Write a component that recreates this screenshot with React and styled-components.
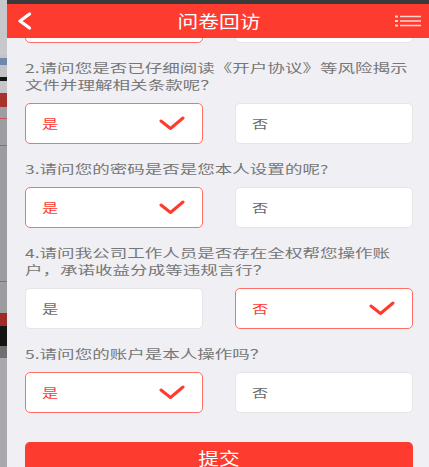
import React from 'react';
import styled, { createGlobalStyle } from 'styled-components';

const GlobalStyle = createGlobalStyle`
  html, body { margin: 0; padding: 0; }
  body {
    width: 429px;
    height: 467px;
    overflow: hidden;
    background: #efeff4;
    font-family: "Noto Sans CJK SC", "Noto Sans", sans-serif;
  }
`;

const Screen = styled.div`
  display: flex;
  width: 429px;
  height: 467px;
  overflow: hidden;
`;

const Backdrop = styled.div`
  width: 7px;
  flex-shrink: 0;
  display: flex;
  flex-direction: column;
  background: #a9a9ad;
`;

const Band = styled.div`
  height: ${(p) => p.$h}px;
  background: ${(p) => p.$c};
  flex-shrink: 0;
`;

const Phone = styled.div`
  flex: 1;
  min-width: 0;
  display: flex;
  flex-direction: column;
  background: #efeff4;
`;

const StatusBar = styled.div`
  height: 4px;
  background: #3a3a3a;
  flex-shrink: 0;
`;

const Header = styled.header`
  height: 34px;
  flex-shrink: 0;
  background: #fd3b2f;
  display: flex;
  align-items: center;
  justify-content: space-between;
  padding: 0 8px 0 10px;
  position: relative;
  z-index: 1;
`;

const HeaderSide = styled.div`
  width: 40px;
  display: flex;
  align-items: center;
  justify-content: ${(p) => (p.$end ? 'flex-end' : 'flex-start')};
`;

const Title = styled.h1`
  margin: 0;
  width: 84px;
  display: flex;
  justify-content: center;
  font-size: 17px;
  font-weight: 400;
  color: #ffffff;
  line-height: 24px;
  white-space: nowrap;
`;

const TitleText = styled.span`
  display: inline-block;
  transform: scaleX(1.22);
`;

const Content = styled.main`
  flex: 1;
  overflow: hidden;
  display: flex;
  flex-direction: column;
  padding: 0 16px 0 18px;
`;

const Question = styled.div`
  margin-top: 16px;
  margin-bottom: 10px;
  color: #767676;
  font-size: 12px;
  line-height: 17px;
`;

const QLine = styled.span`
  display: block;
  white-space: nowrap;
  transform: scaleX(1.46);
  transform-origin: left center;
`;

const Options = styled.div`
  display: grid;
  grid-template-columns: 1fr 1fr;
  column-gap: 32px;
  margin-top: ${(p) => p.$offset || 0}px;
  flex-shrink: 0;
`;

const Option = styled.div`
  height: 41px;
  box-sizing: border-box;
  border-radius: 5px;
  background: #ffffff;
  border: ${(p) => (p.$selected ? '1.5px solid #ff6e64' : '1px solid #e6e6e9')};
  display: flex;
  align-items: center;
  justify-content: space-between;
  padding: 0 17px 0 16px;
`;

const OptionLabel = styled.span`
  font-size: 12px;
  color: ${(p) => (p.$selected ? '#ff3b30' : '#6a6a6a')};
  transform: scaleX(1.35);
  transform-origin: left center;
  display: inline-block;
`;

const Submit = styled.button`
  margin-top: 29px;
  flex-shrink: 0;
  height: 32px;
  border: none;
  border-radius: 5px;
  background: #fd3b2f;
  color: #ffffff;
  font-family: inherit;
  font-size: 17px;
  line-height: 20px;
  display: flex;
  align-items: center;
  justify-content: center;
  padding: 0;
`;

const SubmitText = styled.span`
  display: inline-block;
  transform: scaleX(1.22);
`;

const BackIcon = () => (
  <svg width="15" height="18" viewBox="0 0 15 18">
    <polyline
      points="12.5,2 3,9 12.5,16"
      fill="none"
      stroke="#ffffff"
      strokeWidth="3.2"
      strokeLinecap="round"
      strokeLinejoin="round"
    />
  </svg>
);

const MenuIcon = () => (
  <svg width="26" height="12" viewBox="0 0 26 12">
    {[1.5, 6, 10.5].map((y) => (
      <g key={y} fill="#ffd6d2">
        <rect x="0" y={y - 1} width="3" height="2" />
        <rect x="5" y={y - 0.75} width="21" height="1.5" />
      </g>
    ))}
  </svg>
);

const CheckIcon = () => (
  <svg width="26" height="15" viewBox="0 0 26 15">
    <polyline
      points="2,5 11.5,12.5 24,2"
      fill="none"
      stroke="#ff3b30"
      strokeWidth="3"
      strokeLinecap="round"
      strokeLinejoin="round"
    />
  </svg>
);

const questions = [
  {
    lines: ['2.请问您是否已仔细阅读《开户协议》等风险揭示', '文件并理解相关条款呢？'],
    answer: 'yes',
  },
  { lines: ['3.请问您的密码是否是您本人设置的呢?'], answer: 'yes' },
  {
    lines: ['4.请问我公司工作人员是否存在全权帮您操作账', '户，承诺收益分成等违规言行？'],
    answer: 'no',
  },
  { lines: ['5.请问您的账户是本人操作吗？'], answer: 'yes' },
];

const backdropBands = [
  [55, '#c8c8cc'],
  [3, '#c4c4c8'],
  [7, '#6f86ae'],
  [12, '#c2c2c6'],
  [4, '#151515'],
  [12, '#c6c6ca'],
  [14, '#a8322c'],
  [11, '#9d9da2'],
  [1, '#c05a55'],
  [26, '#9d9da2'],
  [1, '#c05a55'],
  [135, '#9c9ca1'],
  [1, '#c05a55'],
  [31, '#9c9ca1'],
  [13, '#a02a25'],
  [20, '#151515'],
  [12, '#6f6f73'],
  [109, '#a9a9ad'],
];

const AnswerRow = ({ answer, offset }) => (
  <Options $offset={offset}>
    <Option $selected={answer === 'yes'}>
      <OptionLabel $selected={answer === 'yes'}>是</OptionLabel>
      {answer === 'yes' && <CheckIcon />}
    </Option>
    <Option $selected={answer === 'no'}>
      <OptionLabel $selected={answer === 'no'}>否</OptionLabel>
      {answer === 'no' && <CheckIcon />}
    </Option>
  </Options>
);

export default function App() {
  return (
    <>
      <GlobalStyle />
      <Screen>
        <Backdrop>
          {backdropBands.map(([h, c], i) => (
            <Band key={i} $h={h} $c={c} />
          ))}
        </Backdrop>
        <Phone>
          <StatusBar />
          <Header>
            <HeaderSide>
              <BackIcon />
            </HeaderSide>
            <Title>
              <TitleText>问卷回访</TitleText>
            </Title>
            <HeaderSide $end>
              <MenuIcon />
            </HeaderSide>
          </Header>
          <Content>
            <AnswerRow answer="yes" offset={-36} />
            {questions.map((q, i) => (
              <React.Fragment key={i}>
                <Question>
                  {q.lines.map((l) => (
                    <QLine key={l}>{l}</QLine>
                  ))}
                </Question>
                <AnswerRow answer={q.answer} />
              </React.Fragment>
            ))}
            <Submit>
              <SubmitText>提交</SubmitText>
            </Submit>
          </Content>
        </Phone>
      </Screen>
    </>
  );
}
